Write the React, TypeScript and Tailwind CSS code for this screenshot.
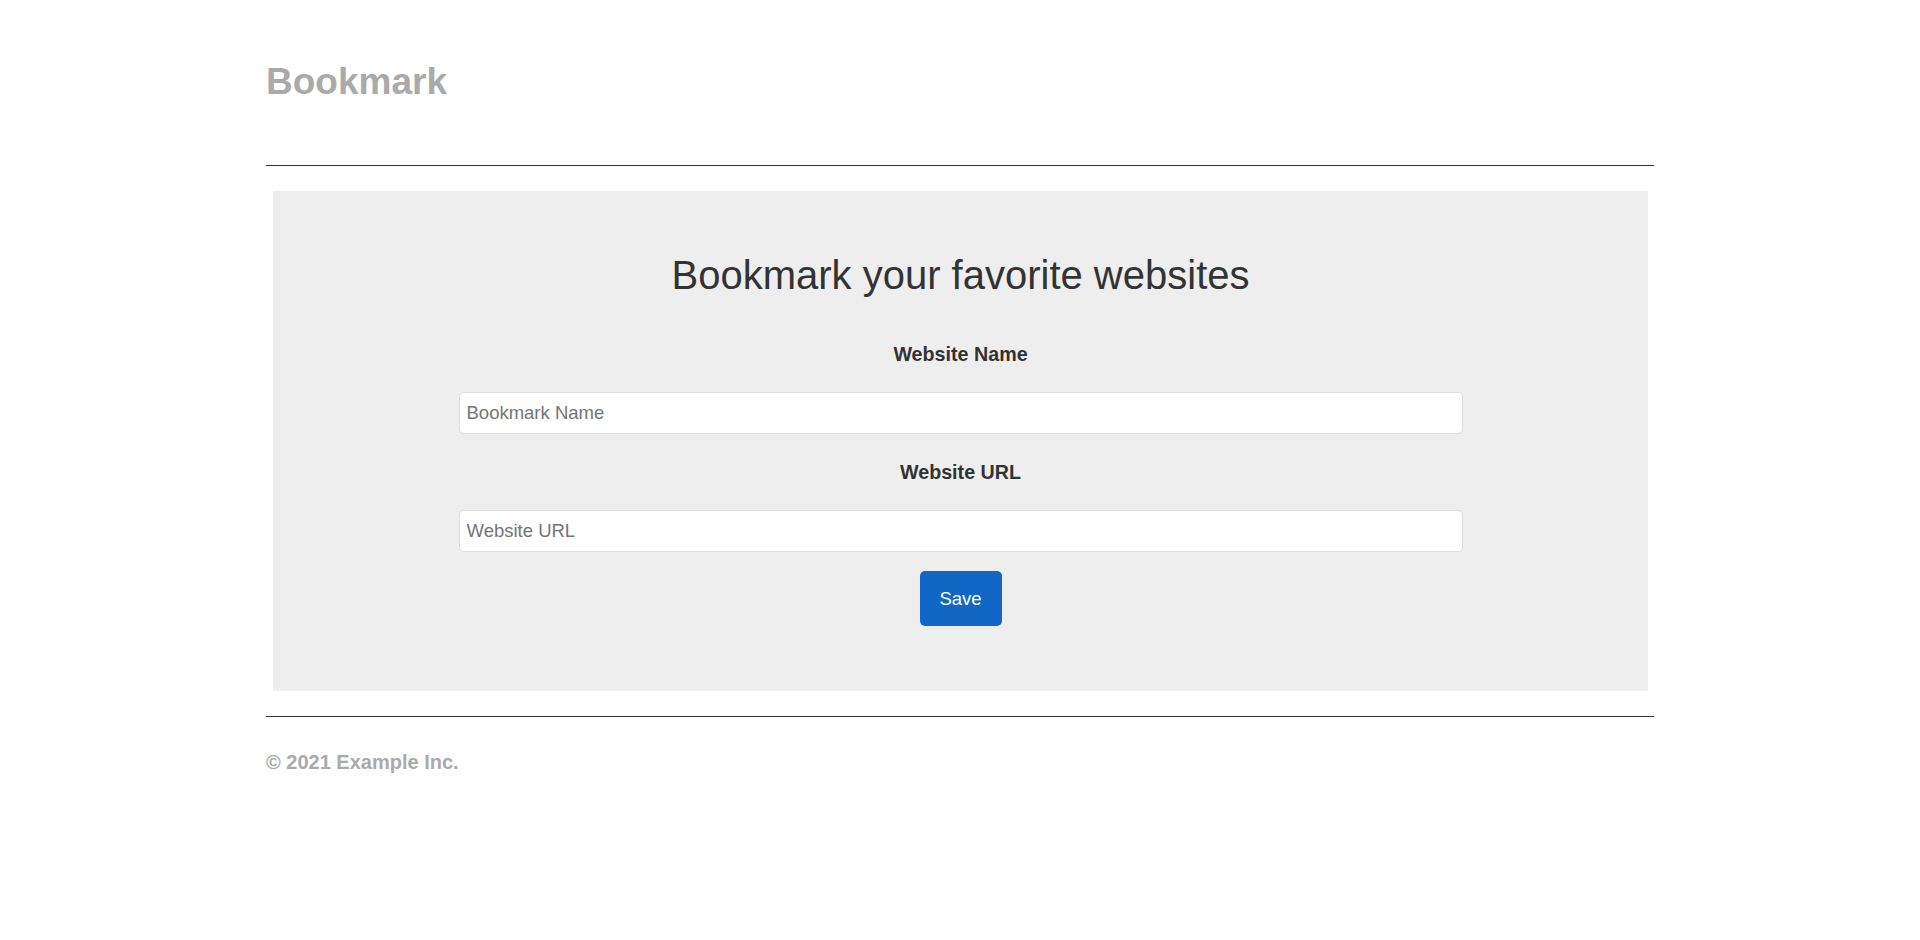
export default function App() {
  return (
    <div className="min-h-[940px] bg-white font-['Liberation_Sans',Arial,sans-serif]">
      <div className="mx-auto w-[1388px] pt-[62px]">
        <h1 className="text-[37px] font-bold leading-[40px] text-[#aaaaaa]">
          Bookmark
        </h1>

        <hr className="mt-[63px] border-0 border-t border-[#333333]" />

        <div className="mt-[25px] ml-[7px] mr-[6px] bg-[#eeeeee] pt-[62px] pb-[65px]">
          <h2 className="text-center text-[40px] leading-[44px] text-[#333333]">
            Bookmark your favorite websites
          </h2>

          <form className="mx-auto flex w-[1004px] flex-col items-center">
            <label className="mt-[45px] text-[19.7px] font-bold leading-[24px] text-[#333333]">
              Website Name
            </label>
            <input
              type="text"
              placeholder="Bookmark Name"
              className="mt-[26px] h-[42px] w-full rounded-[5px] border border-[#dddddd] bg-white px-[7px] text-[18.5px] text-[#333333] outline-none placeholder:text-[#757575]"
            />

            <label className="mt-[26px] text-[19.7px] font-bold leading-[24px] text-[#333333]">
              Website URL
            </label>
            <input
              type="text"
              placeholder="Website URL"
              className="mt-[26px] h-[42px] w-full rounded-[5px] border border-[#dddddd] bg-white px-[7px] text-[18.5px] text-[#333333] outline-none placeholder:text-[#757575]"
            />

            <button
              type="button"
              className="mt-[19px] flex h-[55px] w-[82px] items-center justify-center rounded-[5px] bg-[#1167c4] text-[18.5px] text-white"
            >
              Save
            </button>
          </form>
        </div>

        <hr className="mt-[25px] border-0 border-t border-[#333333]" />

        <p className="mt-[33px] text-[20px] font-bold leading-[24px] text-[#aaaaaa]">
          © 2021 Example Inc.
        </p>
      </div>
    </div>
  );
}
